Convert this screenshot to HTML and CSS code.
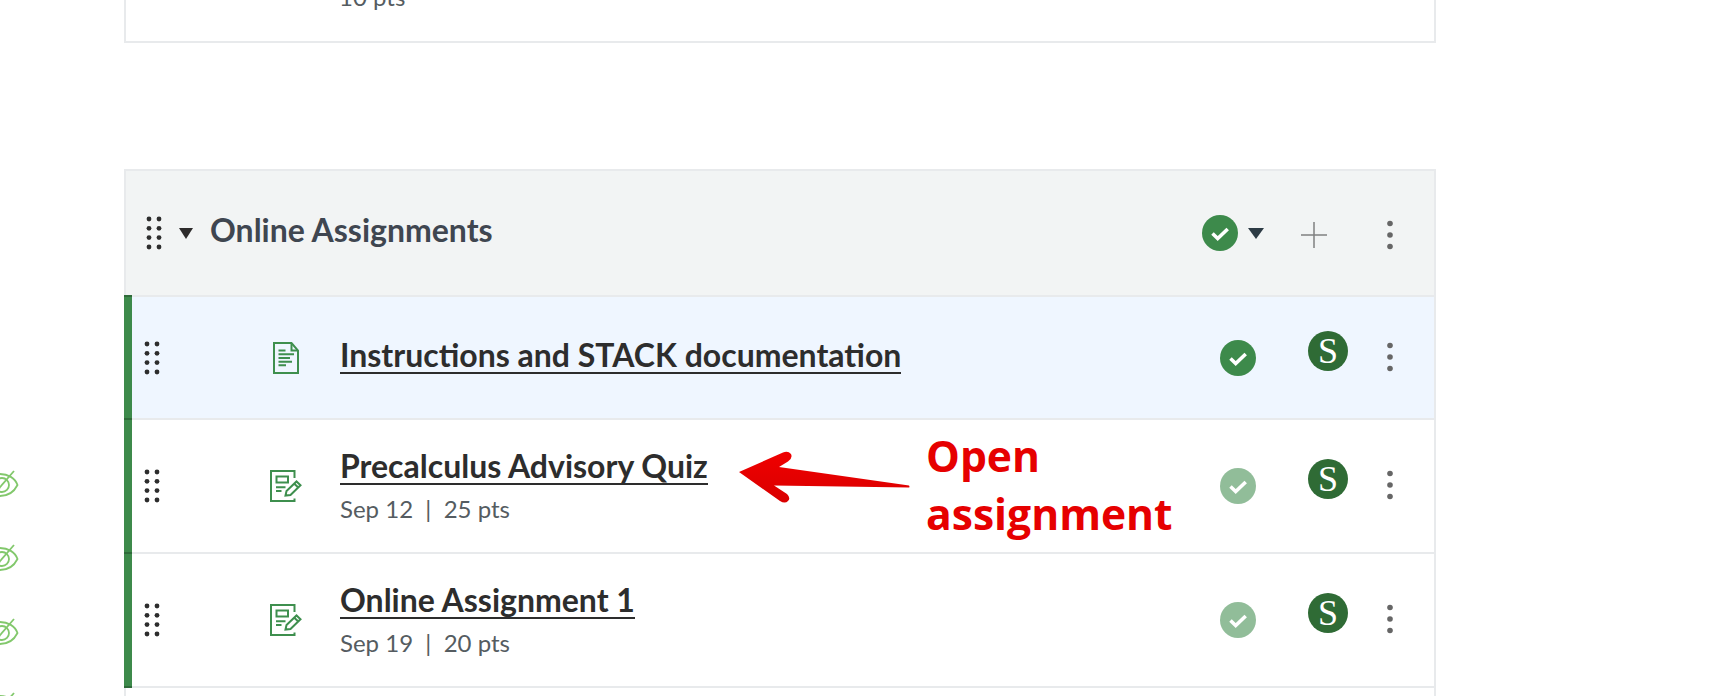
FILE: index.html
```html
<!DOCTYPE html>
<html lang="en">
<head>
    <meta charset="UTF-8">
    <meta name="viewport" content="width=device-width, initial-scale=1.0">
    <title>Modules</title>
    <link rel="stylesheet" href="styles.css">
</head>
<body>
    <svg class="sprite" width="0" height="0">
        <defs>
            <symbol id="dots" viewBox="0 0 16 34">
                <g fill="#2d2d2d">
                    <circle cx="3" cy="3" r="2.4"/><circle cx="13" cy="3" r="2.4"/>
                    <circle cx="3" cy="12.3" r="2.4"/><circle cx="13" cy="12.3" r="2.4"/>
                    <circle cx="3" cy="21.6" r="2.4"/><circle cx="13" cy="21.6" r="2.4"/>
                    <circle cx="3" cy="31" r="2.4"/><circle cx="13" cy="31" r="2.4"/>
                </g>
            </symbol>
            <symbol id="kebab" viewBox="0 0 12 34">
                <circle cx="6" cy="5.5" r="2.8"/><circle cx="6" cy="17" r="2.8"/><circle cx="6" cy="28.5" r="2.8"/>
            </symbol>
            <symbol id="check" viewBox="0 0 36 36">
                <circle cx="18" cy="18" r="18"/>
                <path d="M10.5 18.5l5.2 5 10-9.5" fill="none" stroke="#fff" stroke-width="3.6"/>
            </symbol>
            <symbol id="doc" viewBox="0 0 26 32">
                <g fill="none" stroke="#3e8f4e" stroke-width="2">
                    <path d="M1 1h17.5L25 8.5V31H1z"/>
                    <path d="M18.5 1v7.5H25"/>
                    <path d="M5.5 8.500h7M5.500 12.300h15.500M5.500 16h11.500M5.500 19.700h13.500M5.500 23.300h7.500"/>
                </g>
            </symbol>
            <symbol id="quiz" viewBox="0 0 32 32">
                <g fill="none" stroke="#3e8f4e" stroke-width="2">
                    <path d="M24.500 8V1H1v30h23.500v-2.500"/>
                    <path d="M6.500 6.500h11.500v6H6.500z"/>
                    <path d="M6 17.300h9.500M6 21h5.500"/>
                    <path d="M15.500 25.500l1-4.500 10-9.500 4 3.800-10 9.700z"/>
                    <path d="M24.300 13.700l4 3.800"/>
                </g>
            </symbol>
            <symbol id="eye" viewBox="0 0 44 30">
                <g fill="none" stroke="#82c86c" stroke-width="1.8">
                    <path d="M1 16c6-7 13-11 21-11s15 4 17.500 11C36 23 30 27 22 27S7 23 1 16z"/>
                    <circle cx="24" cy="16" r="7"/>
                    <path d="M17 24L36 2"/>
                </g>
            </symbol>
            <linearGradient id="arrowRed" x1="0" y1="0" x2="0" y2="1">
                <stop offset="0" stop-color="#f00000"/>
                <stop offset="1" stop-color="#d90000"/>
            </linearGradient>
        </defs>
    </svg>

    <div class="eyes">
        <svg class="eye"><use href="#eye"/></svg>
        <svg class="eye"><use href="#eye"/></svg>
        <svg class="eye"><use href="#eye"/></svg>
        <svg class="eye"><use href="#eye"/></svg>
    </div>

    <main class="modules">
        <section class="prev-card">
            <span class="meta">10 pts</span>
        </section>

        <section class="group">
            <header class="group-header">
                <svg class="drag"><use href="#dots"/></svg>
                <span class="caret"></span>
                <h2 class="group-title">Online Assignments</h2>
                <svg class="check"><use href="#check"/></svg>
                <span class="caret-pub"></span>
                <svg class="plus" viewBox="0 0 26 26"><path d="M13 0v26M0 13h26" stroke="#808080" stroke-width="1.500"/></svg>
                <svg class="kebab"><use href="#kebab"/></svg>
            </header>

            <div class="row row-first row-active">
                <svg class="drag"><use href="#dots"/></svg>
                <div class="type-cell"><svg class="icon-doc"><use href="#doc"/></svg></div>
                <div class="info"><a class="item-title">Instructions and STACK documentation</a></div>
                <svg class="check"><use href="#check"/></svg>
                <span class="avatar">S</span>
                <svg class="kebab"><use href="#kebab"/></svg>
            </div>

            <div class="row">
                <svg class="drag"><use href="#dots"/></svg>
                <div class="type-cell"><svg class="icon-quiz"><use href="#quiz"/></svg></div>
                <div class="info">
                    <a class="item-title">Precalculus Advisory Quiz</a>
                    <div class="meta">Sep 12 &nbsp;|&nbsp; 25 pts</div>
                </div>
                <svg class="check check-faded"><use href="#check"/></svg>
                <span class="avatar">S</span>
                <svg class="kebab"><use href="#kebab"/></svg>
            </div>

            <div class="row">
                <svg class="drag"><use href="#dots"/></svg>
                <div class="type-cell"><svg class="icon-quiz"><use href="#quiz"/></svg></div>
                <div class="info">
                    <a class="item-title">Online Assignment 1</a>
                    <div class="meta">Sep 19 &nbsp;|&nbsp; 20 pts</div>
                </div>
                <svg class="check check-faded"><use href="#check"/></svg>
                <span class="avatar">S</span>
                <svg class="kebab"><use href="#kebab"/></svg>
            </div>

            <div class="row-rest"></div>
        </section>
    </main>

    <svg class="callout-arrow" viewBox="0 0 180 60">
        <path fill="url(#arrowRed)" d="M2 24L46 4.500Q51 2.500 54 6Q56 10 51 13.500L42 19L172 37.500Q173 39 172 39.500L37 37.500L50 46Q54 50 51 53Q48 56 43 53z"/>
    </svg>
    <div class="callout">Open<br>assignment</div>
</body>
</html>
```
FILE: styles.css
```css
html, body {
    height: 100%;
}
body {
    margin: 0;
    overflow: hidden;
    position: relative;
    background: #fff;
    font-family: Lato, "Open Sans", Arial, sans-serif;
    color: #2d2d2d;
}
.sprite {
    position: absolute;
}
.modules {
    width: 1312px;
    margin-left: 124px;
}
.prev-card {
    display: flow-root;
    box-sizing: border-box;
    height: 43px;
    border: 2px solid #e8eaec;
    border-top: none;
    padding-left: 213px;
    margin-bottom: 126px;
}
.prev-card .meta {
    display: block;
    margin-top: -16px;
    line-height: 26px;
}
.meta {
    font-size: 24px;
    color: #555c61;
}
.group {
    border: 2px solid #e8eaec;
    border-bottom: none;
}
.group-header {
    display: flex;
    align-items: center;
    height: 124px;
    background: #f2f4f4;
    border-bottom: 2px solid #e8eaec;
    padding: 0 38px 0 20px;
}
.group-title {
    flex: 1;
    margin: 0 1px 8px 17px;
    font-size: 32px;
    font-weight: 700;
    color: #3f4650;
}
.drag {
    width: 16px;
    height: 34px;
    flex: none;
}
.caret {
    width: 0;
    height: 0;
    margin-left: 17px;
    border-left: 7px solid transparent;
    border-right: 7px solid transparent;
    border-top: 11px solid #2d2b2b;
    flex: none;
}
.caret-pub {
    width: 0;
    height: 0;
    margin: 0 37px 0 10px;
    border-left: 8px solid transparent;
    border-right: 8px solid transparent;
    border-top: 11px solid #2d3b45;
    flex: none;
}
.plus {
    width: 26px;
    height: 26px;
    margin: 4px 57px 0 0;
    flex: none;
}
.kebab {
    width: 12px;
    height: 34px;
    margin-top: 4px;
    fill: #666;
    flex: none;
}
.check {
    width: 36px;
    height: 36px;
    fill: #3d8a4b;
    flex: none;
}
.check-faded {
    opacity: 0.56;
}
.row {
    position: relative;
    display: flex;
    align-items: center;
    box-sizing: border-box;
    height: 134px;
    border-bottom: 2px solid #e8eaec;
    padding: 0 38px 0 18px;
}
.row::before {
    content: "";
    position: absolute;
    box-sizing: border-box;
    left: -2px;
    top: 0;
    bottom: -2px;
    width: 8px;
    background: #3d8a4b;
    border-bottom: 2px solid #2f6b3a;
}
.row-first {
    height: 123px;
}
.row-first::before {
    top: -2px;
    border-top: 2px solid #2f6b3a;
}
.row-active {
    background: #eff6ff;
}
.row-rest {
    height: 20px;
}
.type-cell {
    width: 36px;
    margin-left: 108px;
    display: flex;
    justify-content: center;
    flex: none;
}
.icon-doc {
    width: 26px;
    height: 32px;
}
.icon-quiz {
    width: 32px;
    height: 32px;
}
.info {
    flex: 1;
    margin: 0 1px 2px 36px;
}
.row-first .info {
    margin-bottom: 4px;
}
.item-title {
    display: inline-block;
    font-size: 32px;
    font-weight: 700;
    line-height: 34px;
    border-bottom: 2px solid #2d2d2d;
    color: #2d2d2d;
}
.info .meta {
    margin-top: 11px;
    line-height: 26px;
}
.avatar {
    width: 40px;
    height: 40px;
    margin: 0 36px 14px 52px;
    border-radius: 50%;
    background: #2f6b35;
    color: #fff;
    font-family: "Liberation Serif", serif;
    font-size: 36px;
    line-height: 40px;
    text-align: center;
    flex: none;
}
.row .kebab {
    margin: 0 0 2px;
}
.eyes {
    position: absolute;
    left: -22px;
    top: 469px;
    display: flex;
    flex-direction: column;
    gap: 44px;
}
.eye {
    width: 44px;
    height: 30px;
}
.callout-arrow {
    position: absolute;
    left: 737px;
    top: 448px;
    width: 180px;
    height: 60px;
}
.callout {
    position: absolute;
    left: 926px;
    top: 427px;
    font-family: "Open Sans", sans-serif;
    font-size: 42.6px;
    font-weight: 700;
    line-height: 57.6px;
    color: #e60000;
}
```
